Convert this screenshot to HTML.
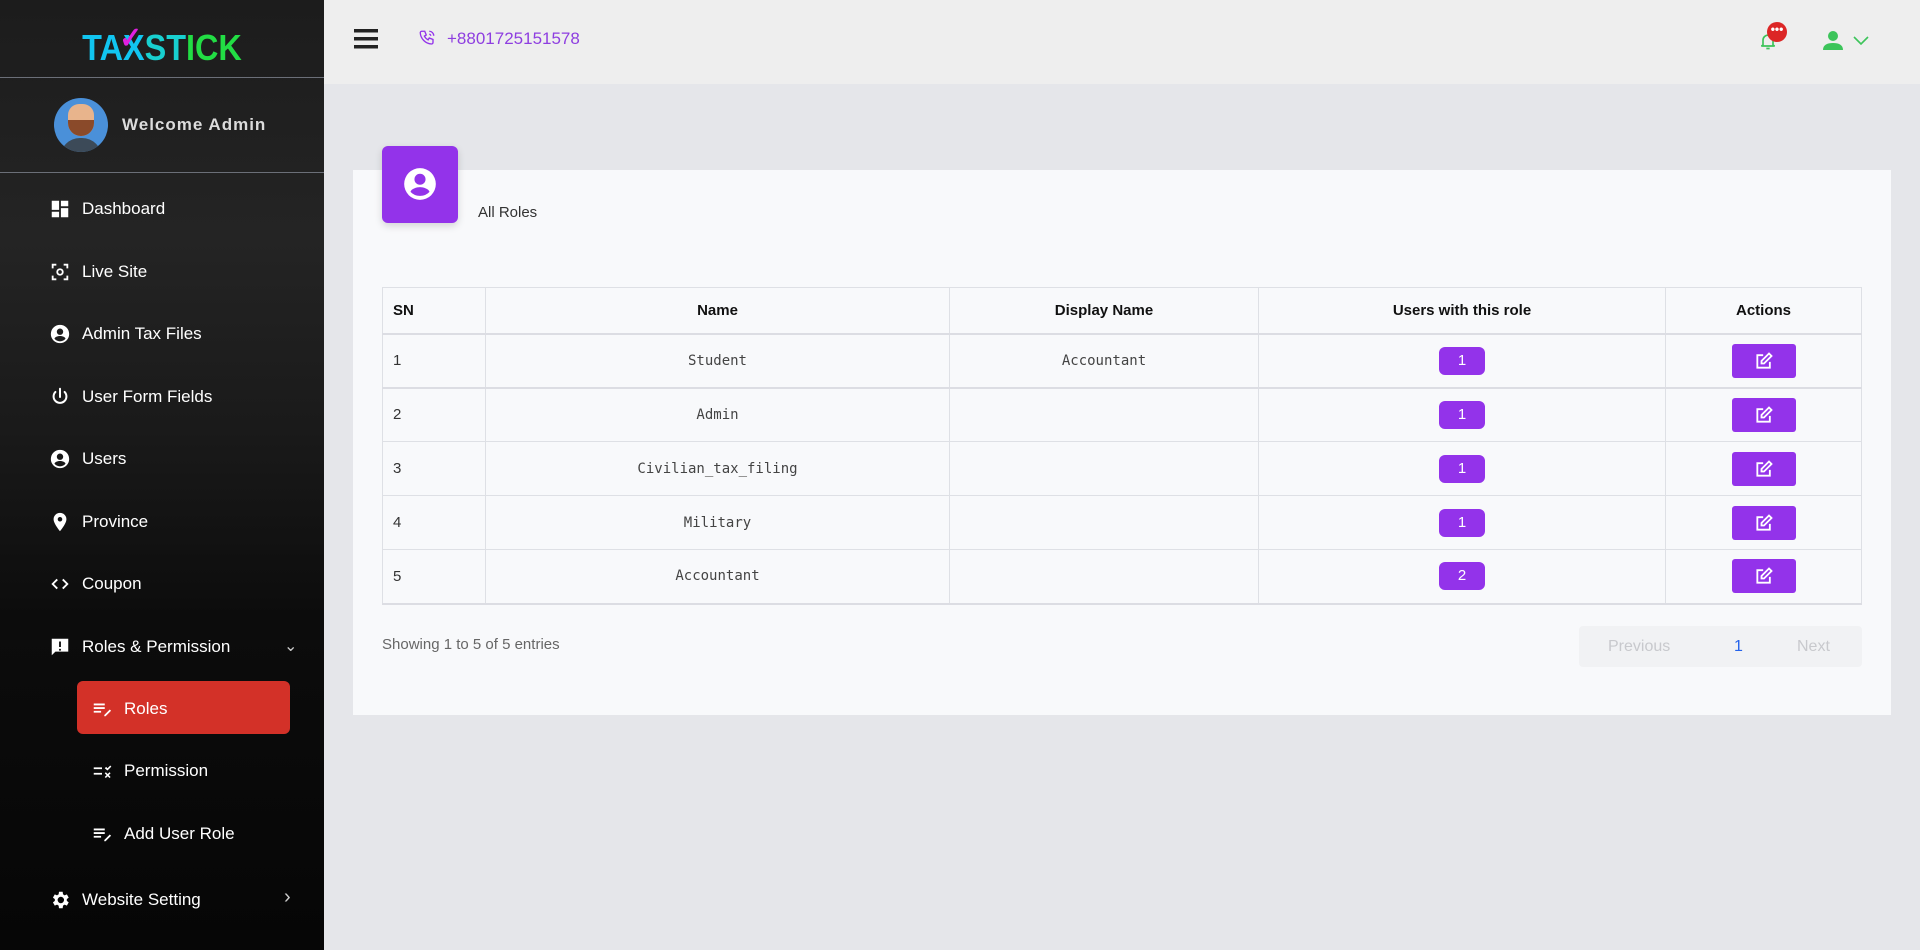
<!DOCTYPE html>
<html><head><meta charset="utf-8">
<style>
*{box-sizing:border-box;margin:0;padding:0}
body{width:1920px;height:950px;overflow:hidden;background:#e5e6ea;font-family:"Liberation Sans",sans-serif;position:relative}
.sb{position:absolute;left:0;top:0;width:324px;height:950px;background:linear-gradient(180deg,#1c1c1c 0%,#242424 25%,#1a1a1a 45%,#0c0c0c 65%,#060606 100%);color:#fff}
.logo{position:absolute;left:0;width:324px;top:27px;text-align:center;font-weight:bold;font-size:36px;letter-spacing:0px;font-family:"Liberation Sans",sans-serif;transform:scaleX(0.9)}
.hr{position:absolute;left:0;width:324px;height:1px;background:#6b6f78}
.av{position:absolute;left:54px;top:98px;width:54px;height:54px;border-radius:50%;background:#4a90d9;overflow:hidden}
.wel{position:absolute;left:122px;top:115px;font-size:17px;font-weight:bold;letter-spacing:1px;color:#dcdcdc}
.mi{position:absolute;left:49px;font-size:17px;color:#fff;display:flex;align-items:center;height:24px}
.mi svg{width:22px;height:22px;margin-right:11px;fill:#fff}
.sub{left:91px}
.active{position:absolute;left:77px;top:681px;width:213px;height:53px;background:#d33128;border-radius:6px}
.chev{position:absolute;left:284px;color:#ccc;font-size:16px}
.hdr{position:absolute;left:324px;top:0;width:1596px;height:84px;background:#eeeeee}
.card{position:absolute;left:353px;top:170px;width:1538px;height:545px;background:#f8f9fb}
.ib{position:absolute;left:382px;top:146px;width:76px;height:77px;background:#9333ea;border-radius:6px;box-shadow:0 3px 8px rgba(0,0,0,.15)}
table{position:absolute;left:382px;top:287px;width:1480px;border-collapse:collapse;font-size:15px}
td,th{border:1px solid #dee0e5;height:54px;color:#333}
th{height:46px;font-weight:bold;color:#111}
td.m{font-family:"DejaVu Sans Mono","Liberation Mono",monospace;font-size:14px;text-align:center;color:#444}
tr.r1 td{border-bottom:2px solid #dcdde3}
thead th{border-bottom:2px solid #dcdde3}
.bd{display:inline-block;width:46px;height:28px;line-height:28px;background:#9333ea;color:#fff;border-radius:6px;font-size:15px;text-align:center}
.eb{display:inline-flex;align-items:center;justify-content:center;width:64px;height:34px;background:#9333ea;border-radius:3px}
</style></head><body>
<div class="sb">
<div class="logo"><span style="color:#11c5f0">TA</span><span style="color:#11c5f0;position:relative">X<span style="position:absolute;left:-4px;top:-6px;color:#e020e0;font-size:30px">✓</span></span><span style="color:#18d0d0">ST</span><span style="color:#22dd44">ICK</span></div>
<div class="hr" style="top:77px"></div>
<div class="av"><div style="position:absolute;left:14px;top:6px;width:26px;height:32px;background:#e8b48c;border-radius:12px 12px 14px 14px"></div><div style="position:absolute;left:14px;top:22px;width:26px;height:16px;background:#8a4a2a;border-radius:0 0 14px 14px"></div><div style="position:absolute;left:6px;top:40px;width:42px;height:20px;background:#3c4a58;border-radius:20px 20px 0 0"></div></div>
<div class="wel">Welcome Admin</div>
<div class="hr" style="top:172px"></div>

<div class="mi" style="top:197px"><svg viewBox="0 0 24 24"><path d="M3 13h8V3H3zm0 8h8v-6H3zm10 0h8V11h-8zm0-18v6h8V3z"/></svg>Dashboard</div>
<div class="mi" style="top:260px"><svg viewBox="0 0 24 24"><path d="M3 3h5v2H5v3H3zm13 0h5v5h-2V5h-3zM3 16h2v3h3v2H3zm16 0h2v5h-5v-2h3zM12 8a4 4 0 110 8 4 4 0 010-8zm0 2a2 2 0 100 4 2 2 0 000-4z"/></svg>Live Site</div>
<div class="mi" style="top:322px"><svg viewBox="0 0 24 24"><path d="M12 2a10 10 0 100 20 10 10 0 000-20zm0 4a3.5 3.5 0 110 7 3.5 3.5 0 010-7zm0 14a8 8 0 01-6-2.8c.1-2 4-3 6-3s5.9 1 6 3A8 8 0 0112 20z"/></svg>Admin Tax Files</div>
<div class="mi" style="top:385px"><svg viewBox="0 0 24 24" fill="none"><path d="M12 3v9M7 6.5a7 7 0 1010 0" stroke="#fff" stroke-width="2.2" fill="none" stroke-linecap="round"/></svg>User Form Fields</div>
<div class="mi" style="top:447px"><svg viewBox="0 0 24 24"><path d="M12 2a10 10 0 100 20 10 10 0 000-20zm0 4a3.5 3.5 0 110 7 3.5 3.5 0 010-7zm0 14a8 8 0 01-6-2.8c.1-2 4-3 6-3s5.9 1 6 3A8 8 0 0112 20z"/></svg>Users</div>
<div class="mi" style="top:510px"><svg viewBox="0 0 24 24"><path d="M12 2a7 7 0 00-7 7c0 5 7 13 7 13s7-8 7-13a7 7 0 00-7-7zm0 9.5a2.5 2.5 0 110-5 2.5 2.5 0 010 5z"/></svg>Province</div>
<div class="mi" style="top:572px"><svg viewBox="0 0 24 24" fill="none"><path d="M9 7l-5 5 5 5M15 7l5 5-5 5" stroke="#fff" stroke-width="2" fill="none"/></svg>Coupon</div>
<div class="mi" style="top:635px"><svg viewBox="0 0 24 24"><path d="M3 3h18v14H7l-4 4zm8 3v6h2V6zm0 8v2h2v-2z" fill-rule="evenodd"/></svg>Roles &amp; Permission</div>
<div class="chev" style="top:636px">&#8964;</div>
<div class="active"></div>
<div class="mi sub" style="top:697px"><svg viewBox="0 0 24 24"><path d="M3 6h12v2H3zm0 4h12v2H3zm0 4h8v2H3zm17.5-1.5l1.4 1.4-6 6H14.5v-1.4z"/></svg>Roles</div>
<div class="mi sub" style="top:759px"><svg viewBox="0 0 24 24"><path d="M3 8h9v2H3zm0 6h9v2H3zm12-5l1.5-1.5 1.5 1.5 3-3 1.2 1.2-4.2 4.2zM15 14.5l1.2-1.2 2 2 2-2 1.2 1.2-2 2 2 2-1.2 1.2-2-2-2 2-1.2-1.2 2-2z"/></svg>Permission</div>
<div class="mi sub" style="top:822px"><svg viewBox="0 0 24 24"><path d="M3 6h12v2H3zm0 4h12v2H3zm0 4h8v2H3zm17.5-1.5l1.4 1.4-6 6H14.5v-1.4z"/></svg>Add User Role</div>
<div class="mi" style="top:888px"><svg viewBox="0 0 24 24"><path d="M19.4 13a7.5 7.5 0 000-2l2.1-1.6-2-3.5-2.5 1a7 7 0 00-1.7-1L14.9 3h-4l-.4 2.9a7 7 0 00-1.7 1l-2.5-1-2 3.5L6.4 11a7.5 7.5 0 000 2l-2.1 1.6 2 3.5 2.5-1a7 7 0 001.7 1l.4 2.9h4l.4-2.9a7 7 0 001.7-1l2.5 1 2-3.5zM12.9 15.5a3.5 3.5 0 110-7 3.5 3.5 0 010 7z"/></svg>Website Setting</div>
<div class="chev" style="top:886px;font-size:20px">&#8250;</div>
</div>

<div class="hdr">
<svg style="position:absolute;left:30px;top:29px" width="24" height="20" viewBox="0 0 24 20"><rect y="0" width="24" height="3.5" fill="#222"/><rect y="8" width="24" height="3.5" fill="#222"/><rect y="16" width="24" height="3.5" fill="#222"/></svg>
<svg style="position:absolute;left:94px;top:29px" width="18" height="18" viewBox="0 0 24 24" fill="none" stroke="#9333ea" stroke-width="1.8"><path d="M5 3h4l2 5-2.5 1.5a11 11 0 005 5L15 12l5 2v4a2 2 0 01-2 2A16 16 0 013 5a2 2 0 012-2zM15 3a6 6 0 016 6M15 7a2 2 0 012 2"/></svg>
<div style="position:absolute;left:123px;top:29px;font-size:17px;color:#8e3ee0">+8801725151578</div>
<svg style="position:absolute;left:1434px;top:30px" width="20" height="22" viewBox="0 0 24 24" fill="none" stroke="#3cc45a" stroke-width="2"><path d="M6 17V11a6 6 0 0112 0v6l2 1H4zM10 21h4"/></svg>
<div style="position:absolute;left:1443px;top:22px;width:20px;height:20px;border-radius:50%;background:#dc2626;color:#fff;font-size:12px;line-height:14px;text-align:center;font-weight:bold">•••</div>
<svg style="position:absolute;left:1498px;top:30px" width="22" height="20" viewBox="0 0 22 20"><circle cx="11" cy="6" r="5" fill="#3cc45a"/><path d="M1 20c0-5 4-7 10-7s10 2 10 7z" fill="#3cc45a"/></svg>
<svg style="position:absolute;left:1529px;top:36px" width="16" height="10" viewBox="0 0 16 10"><path d="M1 1l7 7 7-7" stroke="#3cc45a" stroke-width="1.6" fill="none"/></svg>
</div>

<div class="card"></div>
<div class="ib"><svg style="position:absolute;left:19px;top:19px" width="38" height="38" viewBox="0 0 24 24"><path fill="#fff" d="M12 2a10 10 0 100 20 10 10 0 000-20zm0 3.5a3.5 3.5 0 110 7 3.5 3.5 0 010-7zm0 14a8 8 0 01-6-2.5c.5-2 4-3 6-3s5.5 1 6 3a8 8 0 01-6 2.5z"/></svg></div>
<div style="position:absolute;left:478px;top:204px;font-size:15px;color:#333">All Roles</div>

<table>
<thead><tr><th style="width:103px;text-align:left;padding-left:10px">SN</th><th style="width:464px">Name</th><th style="width:309px">Display Name</th><th style="width:407px">Users with this role</th><th>Actions</th></tr></thead>
<tbody>
<tr class="r1"><td style="padding-left:10px">1</td><td class="m">Student</td><td class="m">Accountant</td><td style="text-align:center"><span class="bd">1</span></td><td style="text-align:center"><span class="eb"><svg width="20" height="20" viewBox="0 0 24 24" fill="none" stroke="#fff" stroke-width="2.2"><path d="M11 5H4v15h15v-7M18 3l3 3-9 9H9v-3z"/></svg></span></td></tr>
<tr><td style="padding-left:10px">2</td><td class="m">Admin</td><td class="m"></td><td style="text-align:center"><span class="bd">1</span></td><td style="text-align:center"><span class="eb"><svg width="20" height="20" viewBox="0 0 24 24" fill="none" stroke="#fff" stroke-width="2.2"><path d="M11 5H4v15h15v-7M18 3l3 3-9 9H9v-3z"/></svg></span></td></tr>
<tr><td style="padding-left:10px">3</td><td class="m">Civilian_tax_filing</td><td class="m"></td><td style="text-align:center"><span class="bd">1</span></td><td style="text-align:center"><span class="eb"><svg width="20" height="20" viewBox="0 0 24 24" fill="none" stroke="#fff" stroke-width="2.2"><path d="M11 5H4v15h15v-7M18 3l3 3-9 9H9v-3z"/></svg></span></td></tr>
<tr><td style="padding-left:10px">4</td><td class="m">Military</td><td class="m"></td><td style="text-align:center"><span class="bd">1</span></td><td style="text-align:center"><span class="eb"><svg width="20" height="20" viewBox="0 0 24 24" fill="none" stroke="#fff" stroke-width="2.2"><path d="M11 5H4v15h15v-7M18 3l3 3-9 9H9v-3z"/></svg></span></td></tr>
<tr style="border-bottom:2px solid #dcdde3"><td style="padding-left:10px">5</td><td class="m">Accountant</td><td class="m"></td><td style="text-align:center"><span class="bd">2</span></td><td style="text-align:center"><span class="eb"><svg width="20" height="20" viewBox="0 0 24 24" fill="none" stroke="#fff" stroke-width="2.2"><path d="M11 5H4v15h15v-7M18 3l3 3-9 9H9v-3z"/></svg></span></td></tr>
</tbody></table>

<div style="position:absolute;left:382px;top:636px;font-size:15px;color:#666">Showing 1 to 5 of 5 entries</div>
<div style="position:absolute;left:1579px;top:626px;width:283px;height:41px;background:#f1f2f4;border-radius:4px;font-size:16px;color:#c8c9cd">
<span style="position:absolute;left:29px;top:12px">Previous</span>
<span style="position:absolute;left:155px;top:12px;color:#2563eb">1</span>
<span style="position:absolute;left:218px;top:12px">Next</span>
</div>
</body></html>
